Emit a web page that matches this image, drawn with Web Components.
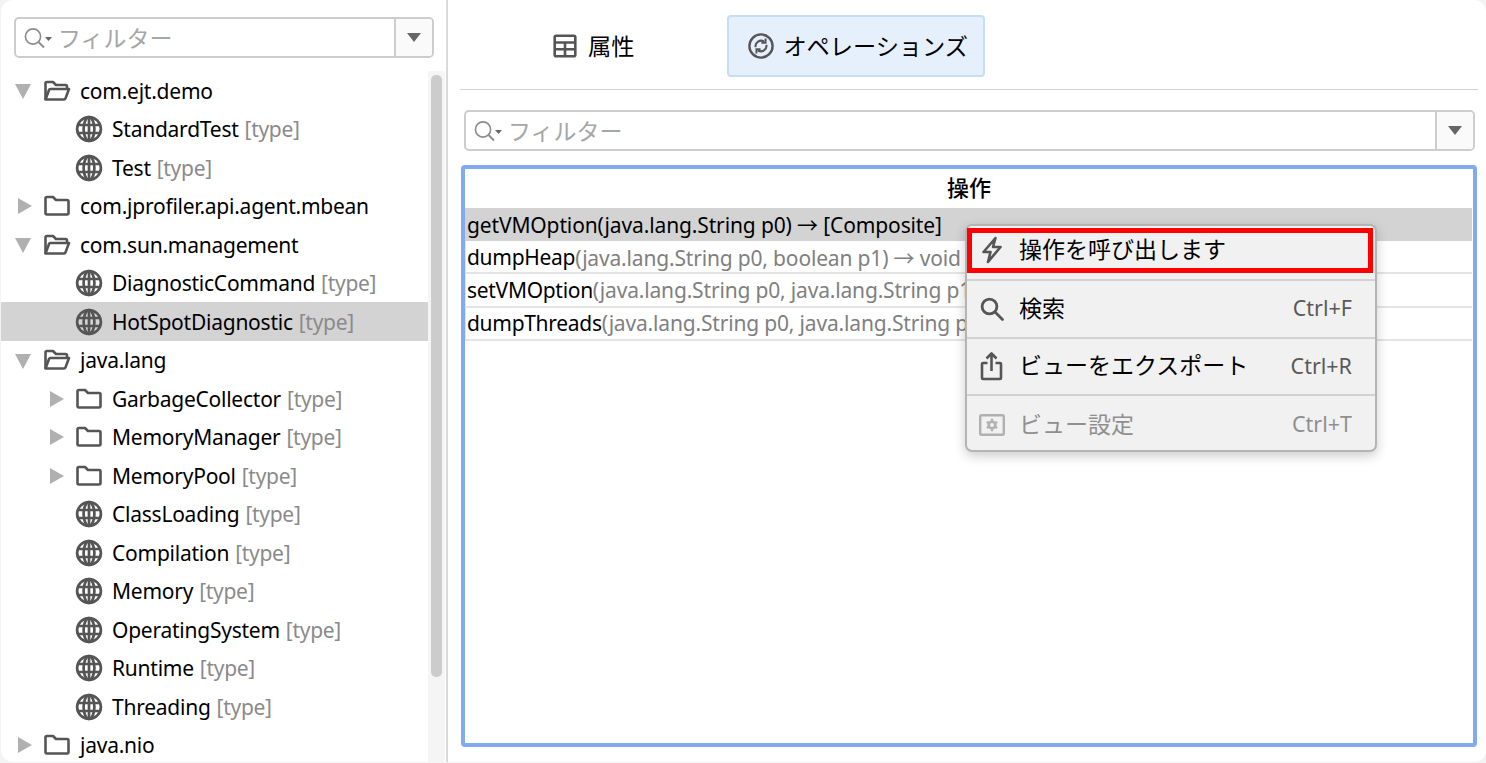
<!DOCTYPE html>
<html lang="ja">
<head>
<meta charset="utf-8">
<title>MBeans</title>
<style>
  html, body { margin: 0; height: 100%; background: #f3f3f3; overflow: hidden; }
  body {
    font-family: "Noto Sans", "Noto Sans CJK JP", sans-serif;
    font-size: 21px;
    color: #000;
  }
</style>
</head>
<body>
<mbean-view>
  <mbean-tree slot="left">
    <tree-row kind="open" label="com.ejt.demo"></tree-row>
    <tree-row kind="globe" depth="1" label="StandardTest" note="[type]"></tree-row>
    <tree-row kind="globe" depth="1" label="Test" note="[type]"></tree-row>
    <tree-row kind="closed" label="com.jprofiler.api.agent.mbean"></tree-row>
    <tree-row kind="open" label="com.sun.management"></tree-row>
    <tree-row kind="globe" depth="1" label="DiagnosticCommand" note="[type]"></tree-row>
    <tree-row kind="globe" depth="1" label="HotSpotDiagnostic" note="[type]" selected></tree-row>
    <tree-row kind="open" label="java.lang"></tree-row>
    <tree-row kind="closed" depth="1" label="GarbageCollector" note="[type]"></tree-row>
    <tree-row kind="closed" depth="1" label="MemoryManager" note="[type]"></tree-row>
    <tree-row kind="closed" depth="1" label="MemoryPool" note="[type]"></tree-row>
    <tree-row kind="globe" depth="1" label="ClassLoading" note="[type]"></tree-row>
    <tree-row kind="globe" depth="1" label="Compilation" note="[type]"></tree-row>
    <tree-row kind="globe" depth="1" label="Memory" note="[type]"></tree-row>
    <tree-row kind="globe" depth="1" label="OperatingSystem" note="[type]"></tree-row>
    <tree-row kind="globe" depth="1" label="Runtime" note="[type]"></tree-row>
    <tree-row kind="globe" depth="1" label="Threading" note="[type]"></tree-row>
    <tree-row kind="closed" label="java.nio"></tree-row>
  </mbean-tree>

  <tab-button slot="tabs" icon="table" label="属性"></tab-button>
  <tab-button slot="tabs" icon="ops" label="オペレーションズ" active></tab-button>

  <ops-table slot="table" heading="操作">
    <ops-row name="getVMOption(java.lang.String p0) → [Composite]" selected></ops-row>
    <ops-row name="dumpHeap" args="(java.lang.String p0, boolean p1) → void"></ops-row>
    <ops-row name="setVMOption" args="(java.lang.String p0, java.lang.String p1"></ops-row>
    <ops-row name="dumpThreads" args="(java.lang.String p0, java.lang.String p1"></ops-row>
    <context-menu slot="menu">
      <menu-item icon="bolt" label="操作を呼び出します" marked></menu-item>
      <menu-item icon="search" label="検索" keys="Ctrl+F"></menu-item>
      <menu-item icon="share" label="ビューをエクスポート" keys="Ctrl+R"></menu-item>
      <menu-item icon="gear" label="ビュー設定" keys="Ctrl+T" disabled></menu-item>
    </context-menu>
  </ops-table>
</mbean-view>

<script>
const ICONS = {
  open: `<svg width="28" height="24" viewBox="0 0 28 24" fill="none" stroke="#555" stroke-width="2.6" stroke-linejoin="round"><path d="M2.5 20.5V4.5a1.5 1.5 0 0 1 1.5-1.5h6l3 3h9.5a1.5 1.5 0 0 1 1.5 1.5v2.5"/><path d="M2.5 20.5 6 11a1.5 1.5 0 0 1 1.4-1H26l-3.6 9.6a1.5 1.5 0 0 1-1.4.9z"/></svg>`,
  closed: `<svg width="28" height="24" viewBox="0 0 28 24" fill="none" stroke="#555" stroke-width="2.6" stroke-linejoin="round"><path d="M2.5 19V4.5A1.5 1.5 0 0 1 4 3h6l3 3h11a1.5 1.5 0 0 1 1.5 1.5V19a1.5 1.5 0 0 1-1.5 1.5H4A1.5 1.5 0 0 1 2.5 19z"/></svg>`,
  globe: `<svg width="28" height="28" viewBox="0 0 28 28" fill="none" stroke="#555" stroke-width="2.7"><circle cx="14" cy="14" r="11.9"/><ellipse cx="14" cy="14" rx="5.4" ry="11.9"/><path d="M14 2v24M3 10h22M3 18h22"/></svg>`,
  table: `<svg width="24" height="24" viewBox="0 0 24 24" fill="none" stroke="#555" stroke-width="2.6"><rect x="1.700" y="1.700" width="20.600" height="20.600" rx="1.500"/><path d="M1.700 8.500h20.600M1.700 15.300h20.600M12 8.500v13.800"/></svg>`,
  ops: `<svg width="26" height="26" viewBox="0 0 26 26" fill="none" stroke="#555" stroke-width="2.400"><circle cx="13" cy="13" r="11.600"/><path d="M7.600 14.200a5.600 5.600 0 0 1 8.600-5.600M18.400 11.800a5.600 5.600 0 0 1-8.600 5.600" stroke-width="2.100"/><path d="M17.600 5.400v4.400h-4.200M8.400 20.600v-4.400h4.200" stroke-width="1.900"/></svg>`,
  bolt: `<svg width="24" height="28" viewBox="0 0 24 28" fill="none" stroke="#555" stroke-width="2.600" stroke-linejoin="round"><path d="M15.500 2 3.500 16h7l-2.500 10 12.500-15h-7.500z"/></svg>`,
  search: `<svg width="26" height="26" viewBox="0 0 26 26" fill="none" stroke="#555" stroke-width="2.800" stroke-linecap="round"><circle cx="10.500" cy="10.500" r="7.400"/><path d="M16 16l7.500 7.500"/></svg>`,
  share: `<svg width="24" height="30" viewBox="0 0 24 30" fill="none" stroke="#555" stroke-width="2.600" stroke-linejoin="round"><path d="M7.500 12H3a1 1 0 0 0-1 1v14a1 1 0 0 0 1 1h17a1 1 0 0 0 1-1V13a1 1 0 0 0-1-1h-4.500"/><path d="M11.500 20V3M6.500 7.500l5-5 5 5"/></svg>`,
  gear: `<svg width="26" height="22" viewBox="0 0 26 22" fill="none" stroke="#b0b0b0" stroke-width="2.400"><rect x="1.200" y="1.200" width="23.600" height="19.600" rx="1.500"/><circle cx="13" cy="11" r="3.300" stroke-width="2.600"/><path d="M13 4.800v2M13 15.200v2M7.800 8l1.800 1M16.400 13l1.800 1M7.800 14l1.800-1M16.400 9l1.800-1" stroke-width="2.300"/></svg>`,
  lens: `<svg width="34" height="24" viewBox="0 0 34 24" fill="none" stroke="#8c8c8c" stroke-width="1.600"><circle cx="10" cy="10.500" r="7.600"/><path d="M15.500 16l5.500 5.500" stroke-width="2"/><path d="M22 11h7l-3.500 4z" fill="#666" stroke="none"/></svg>`
};

class MbeanView extends HTMLElement {
  constructor() {
    super();
    this.attachShadow({ mode: "open" }).innerHTML = `
    <style>
      :host { display: grid; grid-template-columns: 447px 1fr; height: 762px; margin-left: 1px; background: #fff; border-radius: 12px; overflow: hidden; }
      .left { border-right: 2px solid #d9d9d9; display: flex; flex-direction: column; min-height: 0; }
      .left-top { padding: 17px 12px 13px 13px; }
      .right { padding: 15px 8px 15px 12px; display: flex; flex-direction: column; min-width: 0; }
      .tabs { display: flex; height: 62px; padding-left: 82px; flex: none; }
      hr { margin: 12px 0 20px; border: none; border-top: 1px solid #d2d2d2; flex: none; width: 100%; }
      .filter { padding: 0 3px 14px 4px; flex: none; }
      .table { flex: 1; min-height: 0; display: flex; padding: 0 1px; }
    </style>
    <div class="left">
      <div class="left-top"><filter-box></filter-box></div>
      <slot name="left"></slot>
    </div>
    <div class="right">
      <div class="tabs"><slot name="tabs"></slot></div>
      <hr>
      <div class="filter"><filter-box></filter-box></div>
      <div class="table"><slot name="table"></slot></div>
    </div>`;
  }
}

class FilterBox extends HTMLElement {
  constructor() {
    super();
    this.attachShadow({ mode: "open" }).innerHTML = `
    <style>
      :host { display: flex; height: 41px; box-sizing: border-box; border: 2px solid #cdcdcd; border-radius: 5px; background: #fff; }
      .field { flex: 1; display: flex; align-items: center; padding-left: 7px; gap: 1px; min-width: 0; }
      .text { font-family: "Noto Sans CJK JP", sans-serif; font-size: 23px; color: #a6a6a6; line-height: 1; }
      .drop { width: 36px; border-left: 2px solid #cdcdcd; display: flex; align-items: center; justify-content: center; background: #fafafa; border-radius: 0 3px 3px 0; }
      .drop i { width: 0; height: 0; border: 7.500px solid transparent; border-top: 9px solid #666; border-bottom: 0; }
      svg { display: block; }
    </style>
    <div class="field">${ICONS.lens}<span class="text">フィルター</span></div>
    <div class="drop"><i></i></div>`;
  }
}

class MbeanTree extends HTMLElement {
  constructor() {
    super();
    this.attachShadow({ mode: "open" }).innerHTML = `
    <style>
      :host { display: flex; flex: 1; min-height: 0; }
      .rows { flex: 1; min-width: 0; overflow: hidden; padding-top: 0.4px; }
      .track { width: 17px; margin-right: 1px; background: #f5f5f5; flex: none; padding: 4px 3px 0 3px; box-sizing: border-box; }
      .thumb { height: 602px; background: #cccccc; border-radius: 5px; }
    </style>
    <div class="rows"><slot></slot></div>
    <div class="track"><div class="thumb"></div></div>`;
  }
}

class TreeRow extends HTMLElement {
  constructor() {
    super();
    this.attachShadow({ mode: "open" });
  }
  connectedCallback() {
    const kind = this.getAttribute("kind");
    const depth = Number(this.getAttribute("depth") || 0);
    const note = this.getAttribute("note");
    let arrow = "";
    if (kind === "open") arrow = `<i class="down"></i>`;
    if (kind === "closed") arrow = `<i class="right"></i>`;
    this.shadowRoot.innerHTML = `
    <style>
      :host { display: block; height: 38.500px; }
      :host([selected]) { background: #d3d3d3; }
      .row { height: 100%; display: flex; align-items: center; box-sizing: border-box; padding-left: ${13.5 + depth * 32}px; white-space: nowrap; }
      .arrow { width: 28px; flex: none; display: flex; align-items: center; }
      .down { width: 0; height: 0; border: 8px solid transparent; border-top: 15px solid #b0b0b0; border-bottom: 0; margin-top: 2px; }
      .right { width: 0; height: 0; border: 8px solid transparent; border-left: 14px solid #b0b0b0; border-right: 0; margin-left: 3px; }
      .icon { width: 28px; height: 28px; flex: none; display: flex; align-items: center; justify-content: center; margin-right: 9.500px; }
      .label { letter-spacing: -0.24px; }
      .note { color: #8a8a8a; margin-left: 6px; letter-spacing: -0.3px; }
      svg { display: block; }
    </style>
    <div class="row">
      <span class="arrow">${arrow}</span>
      <span class="icon">${ICONS[kind]}</span>
      <span class="label">${this.getAttribute("label")}</span>
      ${note ? `<span class="note">${note}</span>` : ""}
    </div>`;
  }
}

class TabButton extends HTMLElement {
  constructor() {
    super();
    this.attachShadow({ mode: "open" });
  }
  connectedCallback() {
    this.shadowRoot.innerHTML = `
    <style>
      :host { display: flex; align-items: center; box-sizing: border-box; height: 62px; padding: 0 16px 0 9px; border: 2px solid transparent; border-radius: 4px; gap: 11px; font-family: "Noto Sans CJK JP", sans-serif; font-size: 23.200px; }
      :host([active]) { background: #e6f0fc; border-color: #c6ddf6; margin-left: 75px; padding: 0 15px 0 19px; gap: 9px; }
      span { position: relative; top: -1px; }
      svg { display: block; margin-top: -1px; }
    </style>
    ${ICONS[this.getAttribute("icon")]}<span>${this.getAttribute("label")}</span>`;
  }
}

class OpsTable extends HTMLElement {
  constructor() {
    super();
    this.attachShadow({ mode: "open" });
  }
  connectedCallback() {
    this.shadowRoot.innerHTML = `
    <style>
      :host { display: block; flex: 1; position: relative; box-sizing: border-box; border: 4px solid #82aaef; border-radius: 4px; background: #fff; }
      .head { height: 39px; display: flex; align-items: center; justify-content: center; font-family: "Noto Sans CJK JP", sans-serif; font-size: 22px; font-weight: 500; padding-bottom: 6px; box-sizing: border-box; }
    </style>
    <div class="head">${this.getAttribute("heading")}</div>
    <slot></slot>
    <slot name="menu"></slot>`;
  }
}

class OpsRow extends HTMLElement {
  constructor() {
    super();
    this.attachShadow({ mode: "open" });
  }
  connectedCallback() {
    const args = this.getAttribute("args") || "";
    this.shadowRoot.innerHTML = `
    <style>
      :host { display: flex; align-items: center; box-sizing: border-box; height: 33.200px; padding-left: 1px; margin-right: 1px; border-bottom: 2px solid #e4e4e4; border-left: 1px solid #e4e4e4; white-space: nowrap; overflow: hidden; }
      :host([selected]) { background: #d3d3d3; border-color: #d3d3d3; }
      .name { letter-spacing: -0.3px; }
      :host([selected]) .name { letter-spacing: -0.13px; }
      .args { color: #808080; letter-spacing: -0.17px; }
    </style>
    <span class="name">${this.getAttribute("name")}</span><span class="args">${args}</span>`;
  }
}

class ContextMenu extends HTMLElement {
  constructor() {
    super();
    this.attachShadow({ mode: "open" }).innerHTML = `
    <style>
      :host { display: block; position: absolute; left: 500px; top: 55px; width: 412px; height: 228px; box-sizing: border-box; border: 2px solid #b4b4b4; border-radius: 7px; background: #f1f1f1; box-shadow: 0 4px 12px rgba(0,0,0,.2); padding-top: 1px; }
    </style>
    <slot></slot>`;
  }
}

class MenuItem extends HTMLElement {
  constructor() {
    super();
    this.attachShadow({ mode: "open" });
  }
  connectedCallback() {
    const keys = this.getAttribute("keys") || "";
    this.shadowRoot.innerHTML = `
    <style>
      :host { display: block; height: 57.500px; box-sizing: border-box; border-bottom: 2px solid #d2d2d2; position: relative; }
      :host(:last-child) { border-bottom: none; }
      .item { height: 100%; display: flex; align-items: center; padding: 0 23px 0 10px; box-sizing: border-box; }
      .icon { width: 30px; flex: none; display: flex; justify-content: center; margin-right: 12px; }
      .label { flex: 1; font-family: "Noto Sans CJK JP", sans-serif; font-size: 23px; white-space: nowrap; position: relative; top: -2px; }
      .keys { color: #595959; font-size: 21.500px; position: relative; top: -1px; }
      :host([disabled]) .label, :host([disabled]) .keys { color: #8f8f8f; }
      :host([marked]) { height: 54px; }
      :host([marked]) .item { padding-bottom: 6px; }
      .mark { position: absolute; left: 0; right: 2px; top: 1px; height: 45px; box-sizing: border-box; border: 5px solid #ff0000; }
      svg { display: block; }
    </style>
    <div class="item">
      <span class="icon">${ICONS[this.getAttribute("icon")]}</span>
      <span class="label">${this.getAttribute("label")}</span>
      <span class="keys">${keys}</span>
    </div>
    ${this.hasAttribute("marked") ? `<div class="mark"></div>` : ""}`;
  }
}

customElements.define("mbean-view", MbeanView);
customElements.define("filter-box", FilterBox);
customElements.define("mbean-tree", MbeanTree);
customElements.define("tree-row", TreeRow);
customElements.define("tab-button", TabButton);
customElements.define("ops-table", OpsTable);
customElements.define("ops-row", OpsRow);
customElements.define("context-menu", ContextMenu);
customElements.define("menu-item", MenuItem);
</script>
</body>
</html>
